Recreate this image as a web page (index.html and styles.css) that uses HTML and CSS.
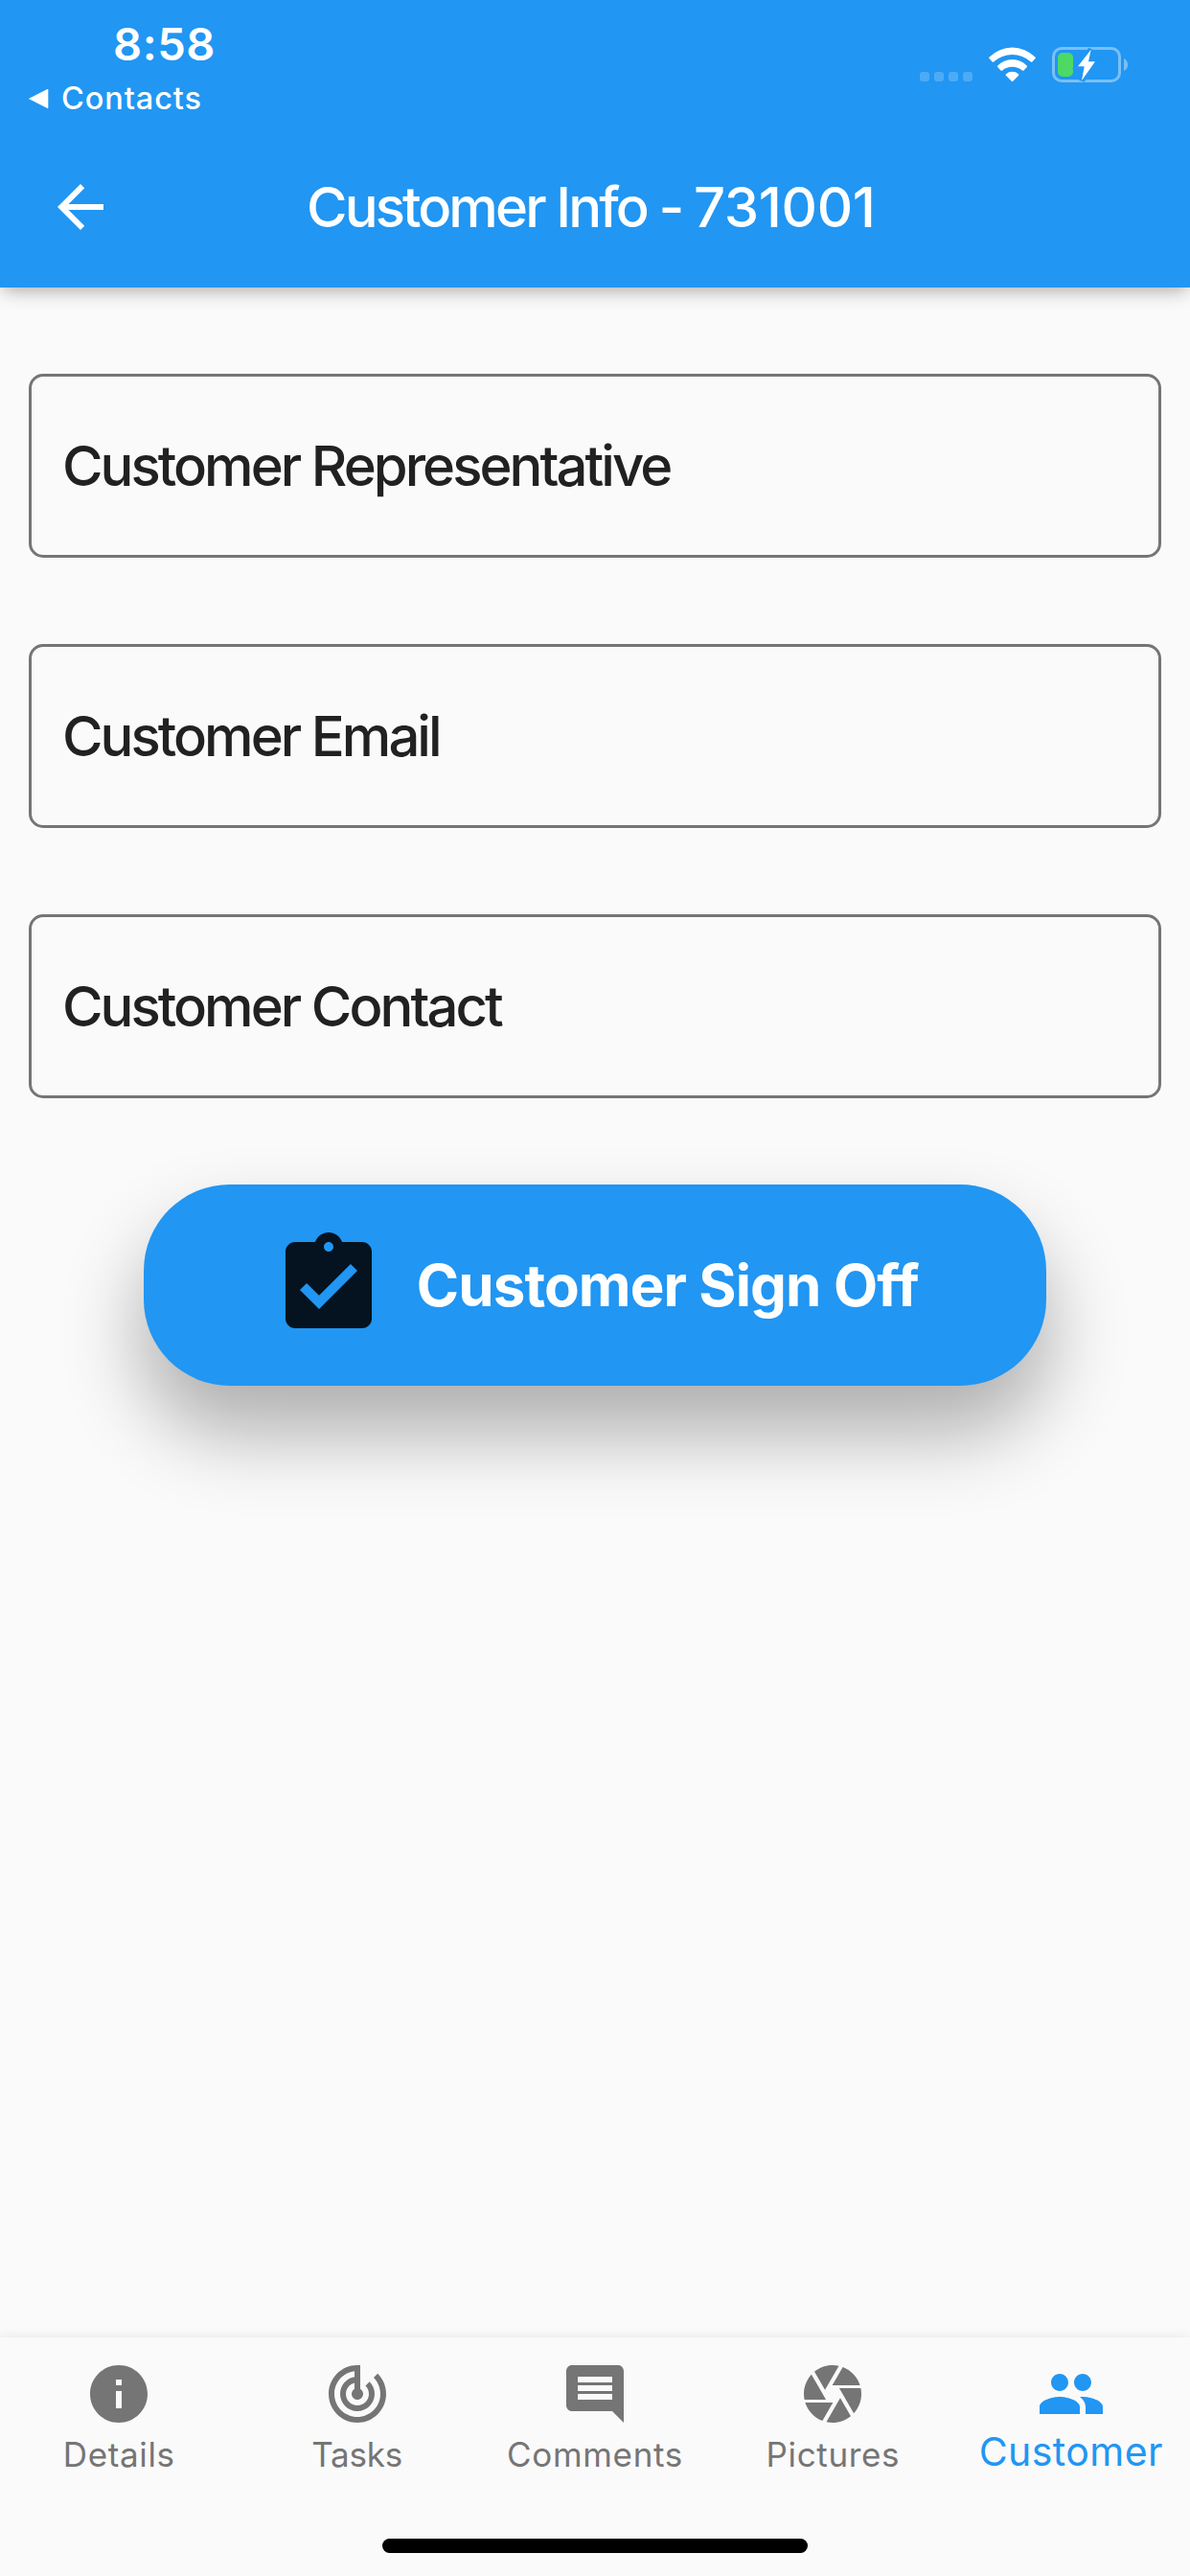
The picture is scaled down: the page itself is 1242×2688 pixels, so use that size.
FILE: index.html
```html
<!DOCTYPE html>
<html lang="en">
<head>
<meta charset="utf-8">
<title>Customer Info</title>
<link rel="stylesheet" href="styles.css">
</head>
<body>
<header class="header">
  <div class="status">
    <div class="status-left">
      <div class="time">8:58</div>
      <div class="back-app">
        <svg class="triangle" viewBox="0 0 22 22"><path d="M0.8 11L20.5 1Q21.3 .8 21.3 1.6V20.6Q21.3 21.4 20.5 21.1Z"/></svg>
        <span>Contacts</span>
      </div>
    </div>
    <svg class="indicators" viewBox="0 0 217 37">
      <g fill="#fff" fill-opacity=".2">
        <rect x="0" y="26" width="10" height="10" rx="3"/>
        <rect x="15" y="26" width="10" height="10" rx="3"/>
        <rect x="30" y="26" width="10" height="10" rx="3"/>
        <rect x="45" y="26" width="10" height="10" rx="3"/>
      </g>
      <g fill="#fff">
        <path d="M72.6 10.4A34 34 0 0 1 120.4 10.4Q121.3 11.3 120.5 12.1L117.4 15.4Q116.7 16 115.9 15.4A29 29 0 0 0 77.1 15.4Q76.3 16 75.6 15.4L72.5 12.1Q71.7 11.3 72.6 10.4Z"/>
        <path d="M81.3 19.4A21.5 21.5 0 0 1 111.7 19.4Q112.5 20.2 111.8 20.9L108.5 24.4Q107.7 25.2 106.9 24.5A16.5 16.5 0 0 0 86.1 24.5Q85.3 25.2 84.5 24.4L81.2 20.9Q80.5 20.2 81.3 19.4Z"/>
        <path d="M90 28.2A9.8 9.8 0 0 1 103 28.2Q103.8 29 103.1 29.7L97.2 35.7Q96.5 36.3 95.8 35.7L89.9 29.7Q89.2 29 90 28.2Z"/>
      </g>
      <rect x="139.5" y="1.5" width="69" height="34" rx="8.5" fill="none" stroke="#fff" stroke-opacity=".4" stroke-width="3"/>
      <path d="M213 12Q217 14 217 18.5T213 25Z" fill="#fff" fill-opacity=".4"/>
      <rect x="144" y="6" width="16" height="25" rx="5" fill="#4cd964"/>
      <path d="M178.7 2.7L176 15.3H183L169 35L171.7 20.3H165Z" fill="#2196f3" stroke="#2196f3" stroke-width="6"/>
      <path d="M178.7 2.7L176 15.3H183L169 35L171.7 20.3H165Z" fill="#fff"/>
    </svg>
  </div>
  <div class="app-bar">
    <svg class="back" viewBox="0 0 24 24"><path d="M20 11H7.83l5.59-5.59L12 4l-8 8 8 8 1.41-1.41L7.83 13H20v-2z"/></svg>
    <h1 class="title">Customer Info - <span class="number">731001</span></h1>
  </div>
</header>
<main class="form">
  <div class="field">Customer Representative</div>
  <div class="field">Customer Email</div>
  <div class="field">Customer Contact</div>
  <button class="sign-off">
    <svg class="clipboard" viewBox="0 0 24 24"><path d="M19 3h-4.18C14.4 1.84 13.3 1 12 1c-1.3 0-2.4.84-2.82 2H5c-1.1 0-2 .9-2 2v14c0 1.1.9 2 2 2h14c1.1 0 2-.9 2-2V5c0-1.1-.9-2-2-2zm-7 0c.55 0 1 .45 1 1s-.45 1-1 1-1-.45-1-1 .45-1 1-1zm-2 14l-4-4 1.41-1.41L10 14.17l6.59-6.59L18 9l-8 8z"/></svg>
    <span>Customer Sign Off</span>
  </button>
</main>
<nav class="nav">
  <div class="tabs">
    <a class="tab">
      <svg class="icon" viewBox="0 0 24 24"><path d="M12 2C6.48 2 2 6.48 2 12s4.48 10 10 10 10-4.48 10-10S17.52 2 12 2zm1 15h-2v-6h2v6zm0-8h-2V7h2v2z"/></svg>
      <span>Details</span>
    </a>
    <a class="tab tab-tasks">
      <svg class="icon" viewBox="0 0 24 24"><path d="M19.07 4.93l-1.41 1.41C19.1 7.79 20 9.79 20 12c0 4.42-3.58 8-8 8s-8-3.58-8-8c0-4.08 3.05-7.44 7-7.93v2.02C8.16 6.57 6 9.03 6 12c0 3.31 2.69 6 6 6s6-2.69 6-6c0-1.66-.67-3.16-1.76-4.24l-1.41 1.41C15.55 9.9 16 10.9 16 12c0 2.21-1.79 4-4 4s-4-1.79-4-4c0-1.86 1.28-3.41 3-3.86v2.14c-.6.35-1 .98-1 1.72 0 1.1.9 2 2 2s2-.9 2-2c0-.74-.4-1.38-1-1.72V2h-1C6.48 2 2 6.48 2 12s4.48 10 10 10 10-4.48 10-10c0-2.76-1.12-5.26-2.93-7.07z"/></svg>
      <span>Tasks</span>
    </a>
    <a class="tab">
      <svg class="icon" viewBox="0 0 24 24"><path d="M21.99 4c0-1.1-.89-2-1.99-2H4c-1.1 0-2 .9-2 2v12c0 1.1.9 2 2 2h14l4 4-.01-18zM18 14H6v-2h12v2zm0-3H6V9h12v2zm0-3H6V6h12v2z"/></svg>
      <span>Comments</span>
    </a>
    <a class="tab">
      <svg class="icon" viewBox="0 0 24 24"><path d="M9.4 10.5l4.77-8.26C13.47 2.09 12.75 2 12 2c-2.4 0-4.6.85-6.32 2.25l3.66 6.35.06-.1zM21.54 9c-.92-2.92-3.15-5.26-6-6.34L11.88 9h9.66zm.26 1h-7.49l.29.5 4.76 8.25C21 16.97 22 14.61 22 12c0-.69-.07-1.35-.2-2zM8.54 12l-3.9-6.75C3.01 7.03 2 9.39 2 12c0 .69.07 1.35.2 2h7.49l-1.15-2zm-6.08 3c.92 2.92 3.15 5.26 6 6.34L12.12 15H2.46zm11.27 0l-3.9 6.76c.7.15 1.42.24 2.17.24 2.4 0 4.6-.85 6.32-2.25l-3.66-6.35-.93 1.6z"/></svg>
      <span>Pictures</span>
    </a>
    <a class="tab tab-active">
      <svg class="icon" viewBox="0 0 24 24"><path d="M16 11c1.66 0 2.99-1.34 2.99-3S17.66 5 16 5c-1.66 0-3 1.34-3 3s1.34 3 3 3zm-8 0c1.66 0 2.99-1.34 2.99-3S9.66 5 8 5C6.34 5 5 6.34 5 8s1.34 3 3 3zm0 2c-2.33 0-7 1.17-7 3.5V19h14v-2.5c0-2.33-4.67-3.5-7-3.5zm8 0c-.29 0-.62.02-.97.05 1.16.84 1.97 1.97 1.97 3.45V19h6v-2.5c0-2.33-4.67-3.5-7-3.5z"/></svg>
      <span>Customer</span>
    </a>
  </div>
  <div class="home-indicator"></div>
</nav>
</body>
</html>
```
FILE: styles.css
```css
* {
  box-sizing: border-box;
}

body {
  margin: 0;
  height: 2688px;
  display: flex;
  flex-direction: column;
  background: #fafafa;
  font-family: Inter, "Liberation Sans", sans-serif;
}

svg {
  display: block;
  flex: none;
  fill: currentColor;
}

.header {
  height: 300px;
  flex: none;
  background: #2196f3;
  color: #fff;
  box-shadow: 0 6px 18px -3px rgba(0, 0, 0, 0.33);
}

.status {
  height: 132px;
  display: flex;
  justify-content: space-between;
  padding: 16px 65px 0 29px;
}

.status-left {
  display: flex;
  flex-direction: column;
  gap: 5px;
}

.time {
  padding-left: 89px;
  font-size: 47px;
  font-weight: 600;
  line-height: 60px;
  letter-spacing: 0.56px;
}

.back-app {
  display: flex;
  align-items: center;
  gap: 13px;
  font-size: 32.5px;
  font-weight: 450;
  line-height: 44px;
  letter-spacing: 0.9px;
}

.triangle {
  width: 22px;
  height: 22px;
}

.indicators {
  width: 217px;
  height: 37px;
  margin-top: 33px;
}

.app-bar {
  height: 168px;
  display: flex;
  align-items: center;
  padding-left: 48px;
}

.back {
  width: 72px;
  height: 72px;
}

.title {
  margin: 0 0 0 200px;
  font-size: 58px;
  font-weight: 500;
  line-height: 72px;
  letter-spacing: -2.9px;
  white-space: nowrap;
}

.number {
  letter-spacing: -0.3px;
}

.form {
  flex: 1;
  display: flex;
  flex-direction: column;
  gap: 90px;
  padding: 90px 30px 0;
}

.field {
  height: 192px;
  display: flex;
  align-items: center;
  padding: 0 32px;
  border: 3px solid #757575;
  border-radius: 15px;
  color: #212121;
  font-size: 58px;
  font-weight: 500;
  letter-spacing: -2.95px;
}

.sign-off {
  width: 942px;
  height: 210px;
  align-self: center;
  display: flex;
  align-items: center;
  justify-content: center;
  gap: 31.5px;
  padding: 0;
  border: 0;
  border-radius: 90px;
  background: #2196f3;
  color: #fff;
  font-family: inherit;
  font-size: 60px;
  font-weight: 700;
  letter-spacing: -0.9px;
  box-shadow: 0 48px 82px 2px rgba(0, 0, 0, 0.3);
}

.clipboard {
  width: 120px;
  height: 120px;
  color: #04131f;
}

.nav {
  height: 249px;
  flex: none;
  display: flex;
  flex-direction: column;
  justify-content: space-between;
  align-items: center;
  padding: 23px 0 24px;
  background: #fafafa;
  box-shadow: 0 0 12px rgba(0, 0, 0, 0.09);
}

.tabs {
  width: 100%;
  display: grid;
  grid-template-columns: repeat(5, 1fr);
}

.tab {
  display: flex;
  flex-direction: column;
  align-items: center;
  gap: 6px;
  color: #757575;
  font-size: 35px;
  line-height: 42px;
  letter-spacing: 0.65px;
}

.tab-tasks {
  letter-spacing: -0.2px;
}

.tab-active {
  gap: 3px;
  color: #2196f3;
  font-size: 41px;
  letter-spacing: 0.44px;
}

.icon {
  width: 72px;
  height: 72px;
}

.home-indicator {
  width: 444px;
  height: 15px;
  border-radius: 7.5px;
  background: #000;
}
```
